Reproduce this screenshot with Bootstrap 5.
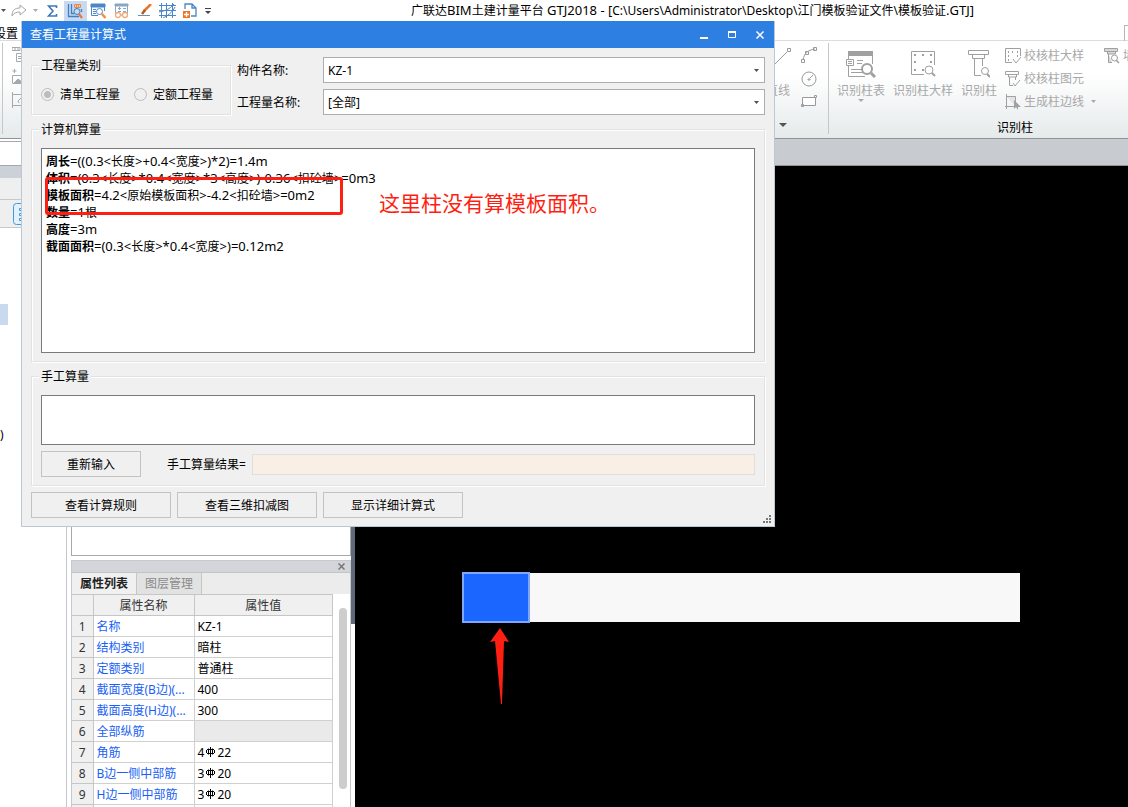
<!DOCTYPE html>
<html lang="zh-CN">
<head>
<meta charset="utf-8">
<meta name="viewport" content="width=device-width, initial-scale=1">
<title>广联达BIM土建计量平台 GTJ2018</title>
<link href="https://cdn.jsdelivr.net/npm/bootstrap@5.3.0/dist/css/bootstrap.min.css" rel="stylesheet">
<style>
body { font-family: "Noto Sans", "Noto Sans CJK SC", sans-serif; font-size: 12px; line-height: 17px; color: #000; background: #fff; }
svg { display: block; flex: none; }
.app { height: 100vh; min-height: 560px; }
.plain { font-size: 12px; line-height: 17px; padding: 0; border: 0; border-radius: 0; color: inherit; }
.la { font-size: 13px; }

/* title bar and tab row */
.app-title { height: 21px; }
.quick .plain { width: 23px; height: 20px; display: flex; align-items: center; justify-content: center; }
.quick .on { background: #c9d9ef; }
.quick .slim { width: 11px; }
.quick .first { width: 7px; }
.doc-name { margin-left: 198px; }
.tabs-row { height: 20px; border-bottom: 1px solid #dcdcdc; }
.tab-end { width: 18px; }
.tab-find { width: 4px; height: 17px; border: 1px solid #b5b5b5; border-right: 0; }

/* ribbon */
.ribbon { height: 98px; background: linear-gradient(#fff 35%, #e5eaeb); border-bottom: 1px solid #8f9395; color: #a8a8a8; }
.rule { width: 1px; margin: 2px 0 4px; background: #c4c8ca; }
.rule-first { margin-left: 2px; }
.rib-hidden { width: 744px; padding: 6px 0 0 9px; }
.rib-draw { width: 65px; }
.rib-column { width: 372px; }
.rib-body { height: 78px; }
.big { display: flex; flex-direction: column; align-items: center; white-space: nowrap; padding-top: 9px; }
.big svg { margin-bottom: 4px; }
.shapes { gap: 8px; padding-top: 6px; }
.small-tool { display: flex; align-items: center; gap: 3px; height: 23px; white-space: nowrap; }
.smalls { padding-top: 3px; }

/* work area */
.side { width: 66px; }
.side-box { height: 25px; border-top: 1px solid #a5a9ad; border-bottom: 1px solid #a5a9ad; margin-top: 2px; }
.side-cap { height: 12px; background: #ccd0d7; }
.side-tab { height: 22px; background: #efefef; border-bottom: 1px solid #c8c8c8; }
.side-bar { height: 28px; background: #efefef; border-bottom: 1px solid #c8c8c8; padding: 3px 0 0 13px; }
.side-pick { width: 8px; height: 21px; margin-top: 76px; background: #c9d9ef; }
.side-text { margin-top: 101px; }
.dock { width: 289px; border-left: 1px solid #c3c6cc; padding-left: 4px; }
.dock-list { width: 280px; height: 417px; border: 1px solid #a9a9a9; }
.dock-panel { width: 280px; margin-top: 4px; border: 1px solid #c6c9ce; border-bottom: 0; }
.dock-cap { height: 12px; background: #d3d5da; border-bottom: 1px solid #c2c4c8; padding-right: 5px; }
.dock-tabs { height: 21px; background: #ececec; }
.dock-tabs .plain { width: 65px; border-right: 1px solid #c6c6c6; color: #8a8a8a; background: #e2e2e2; }
.dock-tabs .active { font-weight: 700; color: #222; background: #f0f0f0; }
.splitter { width: 4px; background: linear-gradient(#5f6b76 485px, #fff 485px); }
.props { width: 261px; table-layout: fixed; margin: 0; border-collapse: collapse; line-height: 17px; }
.props .c-no { width: 21px; }
.props .c-name { width: 101px; }
.props th, .props td { height: 21px; padding: 0 3px; border: 1px solid #d0d0d0; border-left: 0; font-weight: 400; white-space: nowrap; overflow: hidden; text-overflow: ellipsis; }
.props thead th, .props tbody th { background: #f0f0f0; text-align: center; color: #333; border-color: #c6c6c6; }
.props td a { color: #1a5ff5; text-decoration: none; }
.props .off { background: #eaeaea; }
.props svg { display: inline-block; vertical-align: 0; margin: 0 2px; }
.thumb { width: 8px; height: 181px; margin: 14px 0 0 6px; border-radius: 4px; background: #cdcdcd; }
.view-cap { height: 27px; background: #c8cbd0; border-bottom: 1px solid #8f9395; }
.view { background: #000; }

/* calculation window */
.calc { position: absolute; left: 21px; top: 21px; width: 754px; background: #f0f0f0; border: 1px solid #bcc8d6; border-top: 0; }
.calc-cap { height: 27px; background: #2d7fe2; color: #fff; padding-left: 8px; }
.calc-cap .plain { width: 28px; height: 27px; display: flex; align-items: center; justify-content: center; }
.calc-body { display: flex; flex-direction: column; gap: 6px; padding: 9px 9px 8px; }
.box { position: relative; border: 1px solid #e2e2e2; box-shadow: 1px 1px #fff, inset 1px 1px #fff; padding: 0 9px 8px; margin: 0; }
.box legend { float: none; width: auto; margin: 0 0 0 -2px; padding: 0 2px; font-size: 12px; line-height: 17px; background: #f0f0f0; }
.kind { width: 200px; height: 58px; }
.kinds { gap: 6px; padding-top: 12px; }
.kind input { appearance: none; width: 13px; height: 13px; margin: 0; border: 1px solid #bcbcbc; border-radius: 50%; background: #f0f0f0; }
.kind label + input { margin-left: 8px; }
.kind input:checked { background: radial-gradient(#bcbcbc 3px, #f0f0f0 4px); }
.fields { gap: 6px; padding-left: 6px; }
.fields label { width: 86px; }
.pick { height: 26px; padding: 0 20px 0 4px; font-size: 12px; line-height: 17px; color: #000; border: 1px solid #adadad; border-radius: 0; background: #fff url("data:image/svg+xml,%3Csvg xmlns='http://www.w3.org/2000/svg' width='5' height='3'%3E%3Cpath d='M0 0h5L2.500 3z' fill='%23505050'/%3E%3C/svg%3E") no-repeat right 5px center / 5px 3px; }
.formula { height: 205px; margin-top: 10px; padding: 4px; background: #fff; border: 1px solid #7a7a7a; white-space: nowrap; }
.manual { height: 50px; display: block; margin: 10px 0 6px; resize: none; background: #fff; border: 1px solid #7a7a7a; border-radius: 0; }
.push { flex: none; height: 26px; width: 140px; padding: 0; font-size: 12px; line-height: 17px; color: #000; background: #f0f0f0; border: 1px solid #c3c3c3; border-radius: 0; }
.push.short { width: 100px; }
.actions { gap: 6px; }
.result-label { margin: 0 6px 0 26px; }
.result { height: 21px; border: 1px solid #dedede; border-radius: 0; background: #faefe4; }
.mark-box { position: absolute; left: 13px; top: 39px; width: 298px; height: 38px; border: 3px solid #ff1f12; border-radius: 3px; }
.mark-text { position: absolute; left: 347px; top: 50px; font-size: 21px; line-height: 30px; color: #ff1f12; white-space: nowrap; }
.grip { position: absolute; right: 3px; bottom: 3px; }
</style>
</head>
<body>
<svg class="d-none"><symbol id="rebar" viewBox="0 0 9 10"><path d="M4.500 0v10M2.500 1.500v6M6.500 1.500v6M.5 3v3M8.500 3v3M1 2.500h7M1 6.500h7" fill="none" stroke="#000"/></symbol></svg>
<div class="app d-flex flex-column overflow-hidden position-relative">

  <header class="app-title d-flex align-items-center overflow-hidden flex-shrink-0">
    <div class="quick d-flex">
      <button class="btn plain first" aria-label="撤销选项"><svg width="5" height="3"><path d="M0 0h5L2.500 3z" fill="#555"/></svg></button>
      <button class="btn plain" aria-label="重做"><svg width="16" height="13" viewBox="0 0 16 13" fill="none" stroke="#a6a6a6"><path d="M1 12c0-6 3-8 8-8V1l6 5-6 5V8C5 8 3 9 1 12z"/></svg></button>
      <button class="btn plain slim" aria-label="重做选项"><svg width="5" height="3"><path d="M0 0h5L2.500 3z" fill="#aaa"/></svg></button>
      <button class="btn plain" aria-label="汇总"><svg width="11" height="12" viewBox="0 0 11 12" fill="none" stroke="#3c78c0" stroke-width="1.600"><path d="M9.500 3V1H1.500L6 6l-4.500 5h8V9"/></svg></button>
      <button class="btn plain on" aria-label="查看工程量"><svg width="17" height="16" viewBox="0 0 17 16" fill="none" stroke="#3f7fc4"><path d="M1.500 1v12.500H12M4.500 1v9.500h3M14.500 6v3" stroke-width="1.300"/><path d="M7.500 1.500h6v3h-6zM9.500 1.500v3M11.500 1.500v3" stroke="#e98a46"/><circle cx="10" cy="8.500" r="3"/><path d="M12 11l3 4" stroke="#ec7a35" stroke-width="2.200"/></svg></button>
      <button class="btn plain" aria-label="查看计算式"><svg width="17" height="16" viewBox="0 0 17 16" fill="none" stroke="#4a86c8"><path d="M1 1h14v3H1z" fill="#4a86c8"/><path d="M1.500 4v8.500H8M14.500 4v4M3 6.500h3M3 8.500h3M3 10.500h3"/><circle cx="9.500" cy="8.500" r="3" fill="#fff"/><path d="M12 11l3.500 4" stroke="#f0913c" stroke-width="2.500"/></svg></button>
      <button class="btn plain" aria-label="查看报表"><svg width="16" height="16" viewBox="0 0 16 16" fill="none" stroke="#88a7c8"><path d="M1 1h13v2H1z" fill="#88a7c8"/><path d="M1.500 3v7M13.500 3v7M4 5.500h3M5.500 4v3M9 5.500h3M4 8.500h3M9 8.500h3"/><path d="M1.500 12a2.500 2.500 0 1 0 5 0a2.500 2.500 0 1 0-5 0M8.500 12a2.500 2.500 0 1 0 5 0a2.500 2.500 0 1 0-5 0M6.500 12h2" stroke="#efa878" stroke-width="1.300"/></svg></button>
      <button class="btn plain" aria-label="编辑"><svg width="14" height="13" viewBox="0 0 14 13"><path d="M13 0L6 7" stroke="#e8772e" stroke-width="2.500"/><path d="M7 6l-3 4" stroke="#b05a20" stroke-width="2.500"/><path d="M0 11.500h12" stroke="#6c8fae"/></svg></button>
      <button class="btn plain" aria-label="轴网"><svg width="17" height="15" viewBox="0 0 17 15" fill="none" stroke="#4a86c8"><path d="M2.500 0v15M7.500 0v15M13.500 0v15M0 2.500h17M0 7.500h17M0 12.500h17M0 9C6 8 11 6 15 1M4 15C8 13 13 10 16 4"/></svg></button>
      <button class="btn plain" aria-label="新建"><svg width="15" height="15" viewBox="0 0 15 15" fill="none" stroke="#4a86c8" stroke-width="1.300"><path d="M2 6V1h7l4 4v8H8M9 1v4h4"/><path d="M0 8h7v7H0z" fill="#ef7423" stroke="none"/><path d="M3.500 9v5M1 11.500h5" stroke="#fff"/></svg></button>
      <button class="btn plain slim" aria-label="自定义"><svg width="6" height="6"><path d="M0 .5h6" stroke="#444"/><path d="M0 3h6L3 6z" fill="#444"/></svg></button>
    </div>
    <div class="doc-name text-nowrap">广联达<span class="la">BIM</span>土建计量平台<span class="la"> GTJ2018 - [</span>C:\Users\Administrator\Desktop\江门模板验证文件\模板验证<span class="la">.GTJ]</span></div>
  </header>

  <nav class="tabs-row d-flex justify-content-between flex-shrink-0">
    <div class="tab-end d-flex justify-content-end overflow-hidden text-nowrap pt-1"><span class="flex-shrink-0">设置</span></div>
    <div class="tab-find mt-1"></div>
  </nav>

  <section class="ribbon d-flex overflow-hidden flex-shrink-0">
    <div class="rule rule-first flex-shrink-0"></div>
    <div class="rib-hidden flex-shrink-0">
      <svg width="10" height="62" viewBox="0 0 10 62" fill="none" stroke="#a8a8a8"><path d="M0 .5h8v3H0zM3 .5v3M6 .5v3M10 6.500H4.500v8H10M6 9.500h4M6 11.500h4M2.500 22v4M.5 24h4M10 28.500H.5v8H10"/><path d="M2 36l4-4 4 3v1z" fill="#a8a8a8"/><path d="M10 47.500H.5v11H10M.5 45v16M10 50l-4 4 1 2"/></svg>
    </div>
    <div class="rib-draw d-flex flex-column flex-shrink-0 ps-3">
      <div class="rib-body d-flex gap-2">
        <button class="btn plain big pt-1"><svg width="30" height="33" viewBox="0 0 30 33" fill="none" stroke="#999"><path d="M4 27L24 7M24.500 3.500h3v3h-3z"/></svg><span>直线</span></button>
        <div class="shapes d-flex flex-column">
          <button class="btn plain" aria-label="弧线"><svg width="17" height="16" viewBox="0 0 17 16" fill="none" stroke="#999"><path d="M2 13C3 7 6 3 14 2M.5 12.500h3v3h-3zM4.500 4.500h3v3h-3zM12.500.5h3v3h-3z"/></svg></button>
          <button class="btn plain" aria-label="圆"><svg width="16" height="16" viewBox="0 0 16 16" fill="none" stroke="#999"><circle cx="8" cy="8" r="7"/><path d="M7 8h2v1H7zM9 7l3-3"/></svg></button>
          <button class="btn plain" aria-label="矩形"><svg width="17" height="13" viewBox="0 0 17 13" fill="none" stroke="#999"><path d="M1.500 2.500h13v8h-13zM.5 9.500h2v2h-2zM13.500.5h2v2h-2z" fill="#fff"/></svg></button>
        </div>
      </div>
      <svg class="mt-1 ms-3" width="8" height="4"><path d="M0 0h8L4 4z" fill="#555"/></svg>
    </div>
    <div class="d-flex flex-shrink-0 ms-3">
      <div class="rule"></div>
      <div class="rib-column">
        <div class="rib-body d-flex">
          <button class="btn plain big ms-2"><svg width="30" height="28" viewBox="0 0 30 28" fill="none" stroke="#a0a0a0"><path d="M2 1h25v5H2z" fill="#a0a0a0" stroke="none"/><path d="M2.500 6v4M26.500 6v8M2.500 16v10.500H19M5 19.500h11M5 22.500h12M11 10.500h6M11 13.500h5M.5 9.500h7v6h-7zM2 11.500h4M2 13.500h4"/><circle cx="21" cy="19" r="5" fill="#fff" stroke-width="2"/><path d="M25 23l4 4" stroke-width="3"/></svg><span>识别柱表</span><svg width="6" height="3"><path d="M0 0h6L3 3z" fill="#aaa"/></svg></button>
          <button class="btn plain big ms-2"><svg width="26" height="28" viewBox="0 0 26 28" fill="none" stroke="#a0a0a0"><path d="M14 24.500H1.500v-23h23V15"/><path d="M4 5h2M12 5h2M20 5h2M4 12h2M4 20h2M12 20h2M20 12h2" stroke-width="2"/><circle cx="19" cy="20" r="4"/><path d="M22 23l3 3" stroke-width="2"/></svg><span>识别柱大样</span></button>
          <button class="btn plain big ms-2"><svg width="22" height="28" viewBox="0 0 22 28" fill="none" stroke="#a0a0a0"><path d="M.5 .5h20v4h-20zM4.500 4.500v4h12v-4M6.500 8.500v17H13M14.500 8.500V16"/><circle cx="17" cy="21" r="3.500"/><path d="M19 24l3 3" stroke-width="2"/></svg><span>识别柱</span></button>
          <div class="smalls d-flex flex-column ms-2">
            <button class="btn plain small-tool"><svg width="16" height="16" viewBox="0 0 16 16" fill="none" stroke="#a0a0a0"><path d="M7 14.500H.5V.5h15V8M8 11l3 4 5-6"/><path d="M3 4h1M7 4h1M12 4h1M3 8h1M3 12h1M12 8h1" stroke-width="2"/></svg>校核柱大样</button>
            <button class="btn plain small-tool"><svg width="16" height="16" viewBox="0 0 16 16" fill="none" stroke="#a0a0a0"><path d="M.5 .5h13v3H.5zM3.500 4v2h8V4M4.500 6v8.500H8M10.500 6v3M8 12l2 3 5-6"/></svg>校核柱图元</button>
            <button class="btn plain small-tool"><svg width="16" height="16" viewBox="0 0 16 16" fill="none" stroke="#a0a0a0"><path d="M1.500 0v15M0 12.500h11M1.500 2.500h9v10" fill="#e4e4e4"/><path d="M9 6v9l2-2 2 3v-3h3z" fill="#a0a0a0" stroke="none"/></svg>生成柱边线<svg class="ms-1" width="5" height="3"><path d="M0 0h5L2.500 3z" fill="#aaa"/></svg></button>
          </div>
          <div class="smalls ms-2">
            <button class="btn plain small-tool"><svg width="16" height="16" viewBox="0 0 16 16" fill="none" stroke="#a0a0a0"><path d="M.5 .5h13v3H.5zM3.500 4v2h8V4M4.500 6v8.500H8" fill="#d8d8d8"/><circle cx="10.500" cy="10" r="3" fill="#fff"/><path d="M12 12l3 3" stroke-width="1.500"/></svg>墙</button>
          </div>
        </div>
        <div class="text-center text-black">识别柱</div>
      </div>
    </div>
  </section>

  <main class="d-flex flex-grow-1 overflow-hidden">
    <aside class="side flex-shrink-0">
      <div class="side-box"></div>
      <div class="side-cap"></div>
      <div class="side-tab"></div>
      <div class="side-bar"><svg width="22" height="22" viewBox="0 0 22 22" fill="none" stroke="#3d9be0"><rect x=".5" y=".5" width="21" height="21" rx="3" fill="#e3f1fc"/><path d="M6.500 5.500h2v2h-2zM6.500 10.500h2v2h-2zM6.500 15.500h2v2h-2zM11 6.500h7M11 11.500h7M11 16.500h7"/></svg></div>
      <div class="side-pick"></div>
      <div class="side-text">)</div>
    </aside>

    <section class="dock flex-shrink-0 d-flex">
      <div>
        <div class="dock-list"></div>
        <div class="dock-panel">
          <div class="dock-cap d-flex align-items-center justify-content-end"><button class="btn plain" aria-label="关闭面板"><svg width="7" height="7" stroke="#777" stroke-width="1.500"><path d="M.5 .5l6 6M6.500 .5l-6 6"/></svg></button></div>
          <div class="dock-tabs d-flex"><button class="btn plain active">属性列表</button><button class="btn plain">图层管理</button></div>
          <div class="d-flex align-items-start">
            <table class="props">
              <colgroup><col class="c-no"><col class="c-name"><col></colgroup>
              <thead><tr><th></th><th>属性名称</th><th>属性值</th></tr></thead>
              <tbody>
                <tr><th>1</th><td><a href="#">名称</a></td><td>KZ-1</td></tr>
                <tr><th>2</th><td><a href="#">结构类别</a></td><td>暗柱</td></tr>
                <tr><th>3</th><td><a href="#">定额类别</a></td><td>普通柱</td></tr>
                <tr><th>4</th><td><a href="#">截面宽度(B边)(...</a></td><td>400</td></tr>
                <tr><th>5</th><td><a href="#">截面高度(H边)(...</a></td><td>300</td></tr>
                <tr><th>6</th><td><a href="#">全部纵筋</a></td><td class="off"></td></tr>
                <tr><th>7</th><td><a href="#">角筋</a></td><td>4<svg width="9" height="10"><use href="#rebar"/></svg>22</td></tr>
                <tr><th>8</th><td><a href="#">B边一侧中部筋</a></td><td>3<svg width="9" height="10"><use href="#rebar"/></svg>20</td></tr>
                <tr><th>9</th><td><a href="#">H边一侧中部筋</a></td><td>3<svg width="9" height="10"><use href="#rebar"/></svg>20</td></tr>
                <tr><th></th><td></td><td></td></tr>
              </tbody>
            </table>
            <div class="thumb"></div>
          </div>
        </div>
      </div>
      <div class="splitter"></div>
    </section>

    <section class="flex-grow-1 d-flex flex-column overflow-hidden">
      <div class="view-cap flex-shrink-0"></div>
      <div class="view flex-grow-1">
        <svg width="700" height="600" viewBox="0 0 700 600">
          <path d="M174 407h491v49H174z" fill="#f8f8f8"/>
          <path d="M108 407h66v49h-66z" fill="#1a66ff" stroke="#80a6fb" stroke-width="2"/>
          <path d="M145 462l9 14-5-1-2 63h-1l-6-63-5 1z" fill="#ff1f12"/>
        </svg>
      </div>
    </section>
  </main>

  <div class="calc" role="dialog" aria-label="查看工程量计算式">
    <div class="calc-cap d-flex align-items-center justify-content-between">
      <span>查看工程量计算式</span>
      <div class="d-flex">
        <button class="btn plain" aria-label="最小化"><svg width="8" height="8" stroke="#fff" stroke-width="2"><path d="M0 7h8"/></svg></button>
        <button class="btn plain" aria-label="最大化"><svg width="8" height="8" fill="none" stroke="#fff"><path d="M.5 1v5.500h7V1"/><path d="M0 1h8" stroke-width="2"/></svg></button>
        <button class="btn plain" aria-label="关闭"><svg width="8" height="8" stroke="#fff" stroke-width="1.500"><path d="M.5 .5l7 7M7.500 .5l-7 7"/></svg></button>
      </div>
    </div>
    <form class="calc-body">
      <div class="d-flex">
        <fieldset class="box kind">
          <legend>工程量类别</legend>
          <div class="kinds d-flex align-items-center">
            <input type="radio" name="kind" id="k1" checked disabled><label for="k1">清单工程量</label>
            <input type="radio" name="kind" id="k2" disabled><label for="k2">定额工程量</label>
          </div>
        </fieldset>
        <div class="fields flex-grow-1 d-flex flex-column">
          <div class="d-flex align-items-center"><label for="part" class="flex-shrink-0">构件名称:</label><select id="part" class="form-select pick"><option>KZ-1</option></select></div>
          <div class="d-flex align-items-center"><label for="qty" class="flex-shrink-0">工程量名称:</label><select id="qty" class="form-select pick"><option>[全部]</option></select></div>
        </div>
      </div>
      <fieldset class="box">
        <legend>计算机算量</legend>
        <div class="formula">
          <div><b>周长</b><span class="la">=((0.3&lt;</span>长度<span class="la">&gt;+0.4&lt;</span>宽度<span class="la">&gt;)*2)=1.4m</span></div>
          <div><b>体积</b><span class="la">=(0.3&lt;</span>长度<span class="la">&gt;*0.4&lt;</span>宽度<span class="la">&gt;*3&lt;</span>高度<span class="la">&gt;)-0.36&lt;</span>扣砼墙<span class="la">&gt;=0m3</span></div>
          <div><b>模板面积</b><span class="la">=4.2&lt;</span>原始模板面积<span class="la">&gt;-4.2&lt;</span>扣砼墙<span class="la">&gt;=0m2</span></div>
          <div><b>数量</b><span class="la">=1</span>根</div>
          <div><b>高度</b><span class="la">=3m</span></div>
          <div><b>截面面积</b><span class="la">=(0.3&lt;</span>长度<span class="la">&gt;*0.4&lt;</span>宽度<span class="la">&gt;)=0.12m2</span></div>
        </div>
        <div class="mark-box"></div>
        <div class="mark-text">这里柱没有算模板面积。</div>
      </fieldset>
      <fieldset class="box">
        <legend>手工算量</legend>
        <textarea class="manual form-control" aria-label="手工算量"></textarea>
        <div class="d-flex align-items-center">
          <button type="button" class="btn push short">重新输入</button>
          <label for="res" class="result-label flex-shrink-0">手工算量结果=</label>
          <input id="res" class="form-control result" readonly>
        </div>
      </fieldset>
      <div class="actions d-flex">
        <button type="button" class="btn push">查看计算规则</button>
        <button type="button" class="btn push">查看三维扣减图</button>
        <button type="button" class="btn push">显示详细计算式</button>
      </div>
    </form>
    <svg class="grip" width="8" height="8" fill="#777"><path d="M6 0h2v2H6zM3 3h2v2H3zM6 3h2v2H6zM0 6h2v2H0zM3 6h2v2H3zM6 6h2v2H6z"/></svg>
  </div>
</div>
<script src="https://cdn.jsdelivr.net/npm/bootstrap@5.3.0/dist/js/bootstrap.bundle.min.js"></script>
</body>
</html>
